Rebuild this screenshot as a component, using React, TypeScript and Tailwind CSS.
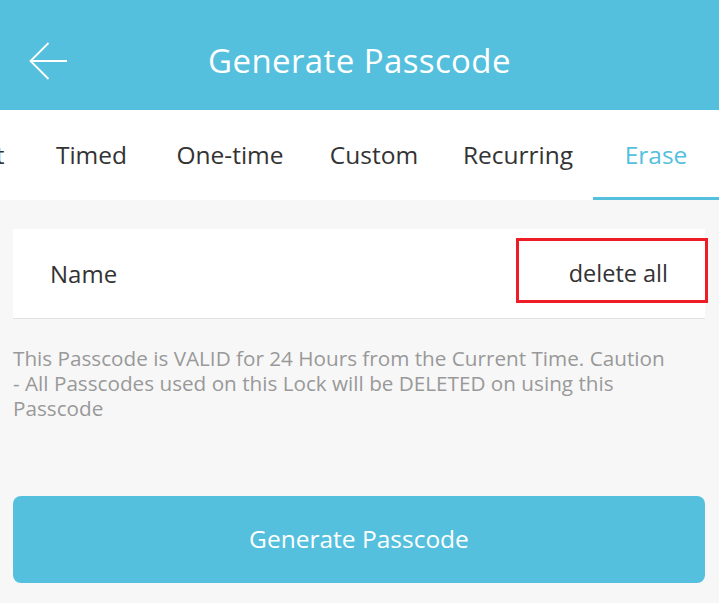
const tabs = [
  { label: "t", w: "w-[56px] -ml-[28px]", active: false },
  { label: "Timed", w: "w-[127px]", active: false },
  { label: "One-time", w: "w-[150px]", active: false },
  { label: "Custom", w: "w-[138px]", active: false },
  { label: "Recurring", w: "w-[150px]", active: false },
  { label: "Erase", w: "w-[126px]", active: true },
];

const App = () => {
  return (
    <div className="w-[719px] h-[603px] overflow-hidden bg-[#f7f7f7] font-['Open_Sans',sans-serif]">
      <div className="h-[110px] bg-[#54c0de] flex items-center pt-[12px] relative">
        <svg
          className="absolute left-[29px] top-[42px]"
          width="39"
          height="38"
          viewBox="0 0 39 38"
          fill="none"
          stroke="white"
          strokeWidth="1.8"
        >
          <path d="M38 19H1.5M19.5 1L1.5 19L19.5 37" />
        </svg>
        <h1 className="w-full text-center text-white text-[33px] tracking-[0.4px]">Generate Passcode</h1>
      </div>

      <div className="h-[90px] bg-white flex overflow-hidden">
        {tabs.map((t) => (
          <div
            key={t.label}
            className={`${t.w} shrink-0 flex items-center justify-center pt-[3px] text-[24.5px] border-b-[3px] ${
              t.active ? "text-[#54c0de] border-[#54c0de]" : "text-[#333] border-transparent"
            }`}
          >
            {t.label}
          </div>
        ))}
      </div>

      <div className="px-[13px] pt-[29px]">
        <div className="relative w-[692px] h-[90px] bg-white border-b border-[#e2e2e2] flex items-center justify-between pl-[37px] pr-[37px]">
          <span className="text-[24px] text-[#333]">Name</span>
          <span className="text-[23.5px] text-[#333]">delete all</span>
          <div className="absolute left-[503px] top-[9px] w-[192px] h-[65px] border-[3px] border-[#ee1c25]" />
        </div>

        <p className="mt-[27px] text-[20.7px] leading-[25px] text-[#999]">
          <span className="block whitespace-nowrap">This Passcode is VALID for 24 Hours from the Current Time. Caution</span>
          <span className="block whitespace-nowrap">- All Passcodes used on this Lock will be DELETED on using this</span>
          <span className="block">Passcode</span>
        </p>

        <button className="mt-[75px] w-[692px] h-[87px] rounded-[8px] bg-[#54c0de] text-white text-[24.5px]">
          Generate Passcode
        </button>
      </div>
    </div>
  );
};

export default App;
